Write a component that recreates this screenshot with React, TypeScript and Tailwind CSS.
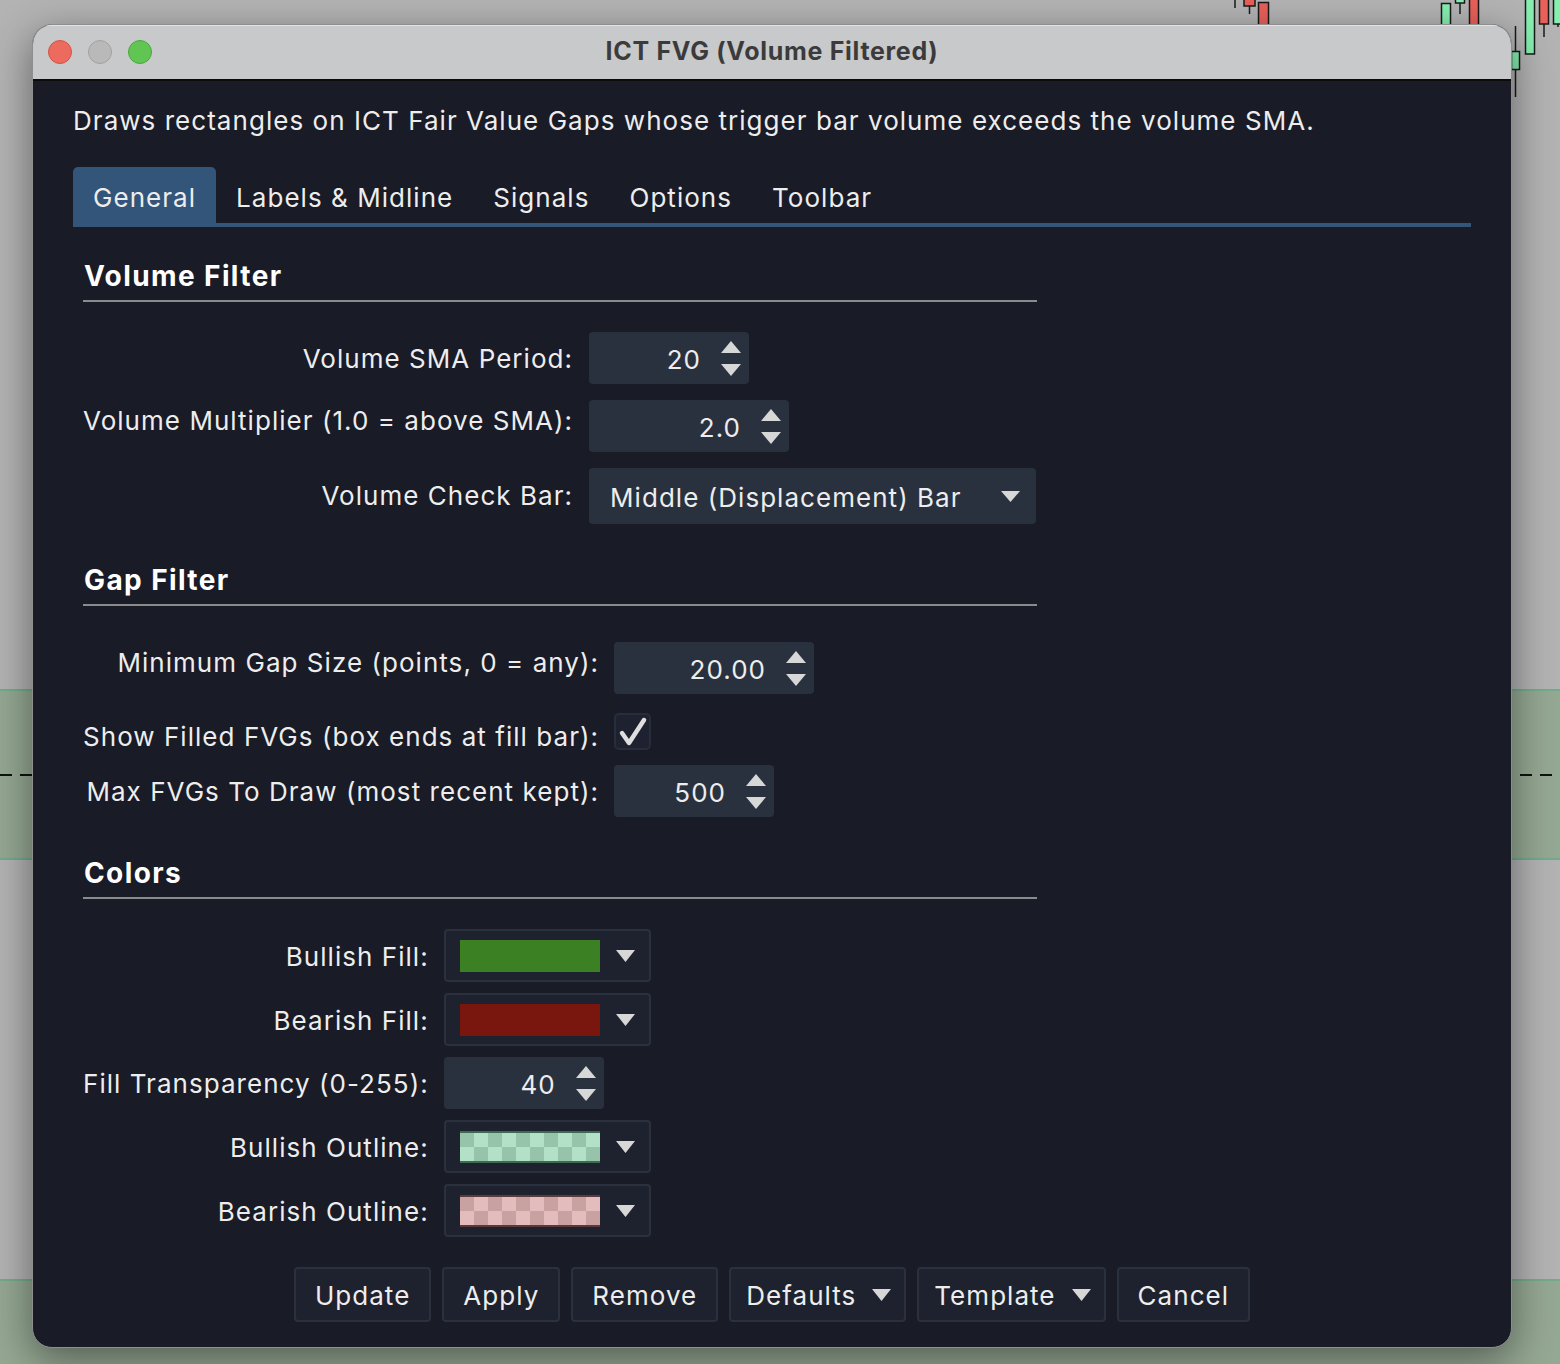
import React from 'react';

type TriProps = { dir?: 'up' | 'down'; w?: number; h?: number; className?: string };
const Tri = ({ dir = 'down', w = 19, h = 11, className = '' }: TriProps) => (
  <svg width={w} height={h} viewBox={`0 0 ${w} ${h}`} className={className}>
    {dir === 'down' ? (
      <polygon points={`0,0 ${w},0 ${w / 2},${h}`} fill="#d7d7d7" />
    ) : (
      <polygon points={`0,${h} ${w},${h} ${w / 2},0`} fill="#d7d7d7" />
    )}
  </svg>
);

const Spinner = ({ value, width }: { value: string; width: string }) => (
  <div className={`flex h-[52px] items-center rounded-[4px] bg-[#29313f] ${width}`}>
    <span className="flex-1 translate-y-[2px] text-right leading-none">{value}</span>
    <div className="ml-[20px] mr-[8px] flex flex-col gap-[11px]">
      <Tri dir="up" w={20} h={12} />
      <Tri dir="down" w={20} h={12} />
    </div>
  </div>
);

const Checker = ({ a, b, edge }: { a: string; b: string; edge: string }) => {
  const cells: React.ReactNode[] = [];
  for (let c = 0; c < 10; c++) {
    for (let r = 0; r < 2; r++) {
      cells.push(
        <rect key={`${c}-${r}`} x={c * 14} y={2 + r * 14} width={14} height={14} fill={(c + r) % 2 === 0 ? a : b} />
      );
    }
  }
  return (
    <svg width={140} height={32} viewBox="0 0 140 32" className="block">
      <rect x={0} y={0} width={140} height={32} fill={edge} />
      {cells}
    </svg>
  );
};

const ColorCombo = ({ children }: { children: React.ReactNode }) => (
  <div className="flex h-[53px] w-[207px] items-center rounded-[4px] border-2 border-[#2b303e] bg-[#1e222e] pl-[14px]">
    {children}
    <Tri className="ml-[16px]" w={19} h={12} />
  </div>
);

const Label = ({ children, className = 'translate-y-[1px]' }: { children: React.ReactNode; className?: string }) => (
  <div className={`self-center text-right leading-[36px] whitespace-nowrap ${className}`}>{children}</div>
);

const SectionHeader = ({ title }: { title: string }) => (
  <div className="w-[954px] border-b-2 border-[#8b8b8b] pb-[7px]">
    <div className="translate-y-[1px] pl-[1px] text-[28px] leading-[36px] font-bold tracking-[1.4px] text-white">{title}</div>
  </div>
);

const Button = ({ children, arrow = false }: { children: React.ReactNode; arrow?: boolean }) => (
  <div
    className={`flex h-[55px] items-center rounded-[4px] border-2 border-[#2b303e] bg-[#1e222e] ${
      arrow ? 'pl-[15px] pr-[13px]' : 'px-[19px]'
    }`}
  >
    <span className="translate-y-[1px] leading-none">{children}</span>
    {arrow && <Tri className="ml-[16px]" w={19} h={12} />}
  </div>
);

export default function App() {
  return (
    <div className="relative h-[1364px] w-[1560px] overflow-hidden bg-[#b3b3b3] font-['Inter','Noto_Sans',sans-serif]">
      {/* chart background */}
      <div className="absolute left-0 top-[689px] h-[171px] w-full border-y-2 border-[#72ab8b] bg-[#95a893]" />
      <div className="absolute left-0 top-[774px] h-[2px] w-full bg-[repeating-linear-gradient(90deg,#111_0px,#111_12px,transparent_12px,transparent_20px)]" />
      <div className="absolute left-0 top-[1279px] h-[85px] w-full border-t-2 border-[#72ab8b] bg-[#95a893]" />
      <svg className="absolute left-0 top-0" width={1560} height={110} viewBox="0 0 1560 110">
        <g stroke="#1a1a1a" strokeWidth={1.5}>
          <line x1={1235} y1={0} x2={1235} y2={8} />
          <line x1={1249.5} y1={0} x2={1249.5} y2={14} />
          <rect x={1244} y={-2} width={11} height={8} fill="#e8605a" />
          <rect x={1258.5} y={2.5} width={10} height={30} fill="#e8605a" />
          <rect x={1441.5} y={3.5} width={9} height={30} fill="#86efb0" />
          <line x1={1460} y1={0} x2={1460} y2={14} />
          <rect x={1455.5} y={-2} width={9} height={5} fill="#86efb0" />
          <rect x={1469.5} y={-2} width={9} height={34} fill="#e8605a" />
          <line x1={1515.5} y1={26} x2={1515.5} y2={97} />
          <rect x={1511.5} y={51.5} width={8} height={18} fill="#86efb0" />
          <rect x={1525.5} y={-2} width={9} height={56} fill="#86efb0" />
          <line x1={1544} y1={0} x2={1544} y2={37} />
          <rect x={1539.5} y={-2} width={9} height={26} fill="#e8605a" />
          <line x1={1558} y1={0} x2={1558} y2={27} />
          <rect x={1553.5} y={-2} width={9} height={26} fill="#86efb0" />
        </g>
      </svg>

      {/* window */}
      <div className="absolute left-[32px] top-[24px] w-[1480px] overflow-hidden rounded-[20px] border border-[#8e8e8e] bg-[#191b26] text-[26px] tracking-[1.04px] text-[#ededed] shadow-[0_12px_40px_rgba(0,0,0,0.45)]">
        {/* title bar */}
        <div className="relative flex h-[56px] items-center border-b-2 border-[#0c0c0c] bg-[#c8c9cb] shadow-[inset_0_1px_0_#e2e3e4]">
          <div className="ml-[15px] flex gap-[16px]">
            <div className="h-[24px] w-[24px] rounded-full border border-[#d35446] bg-[#ec6a5e]" />
            <div className="h-[24px] w-[24px] rounded-full border border-[#a2a2a2] bg-[#b9b9b9]" />
            <div className="h-[24px] w-[24px] rounded-full border border-[#4aa83f] bg-[#61c554]" />
          </div>
          <div className="absolute inset-0 flex items-center justify-center text-[25px] font-bold tracking-[0.7px] text-[#3b3b3b]">
            ICT FVG (Volume Filtered)
          </div>
        </div>

        {/* body */}
        <div className="px-[40px] pt-[22px] pb-[25px]">
          <div className="leading-[36px]">
            Draws rectangles on ICT Fair Value Gaps whose trigger bar volume exceeds the volume SMA.
          </div>

          {/* tabs */}
          <div className="mt-[28px] flex border-b-4 border-[#34557a]">
            <div className="flex h-[56px] items-center rounded-t-[5px] bg-[#34557a] px-[20px] pt-[4px]">General</div>
            <div className="flex h-[56px] items-center px-[20px] pt-[4px]">Labels &amp; Midline</div>
            <div className="flex h-[56px] items-center px-[20px] pt-[4px]">Signals</div>
            <div className="flex h-[56px] items-center px-[20px] pt-[4px]">Options</div>
            <div className="flex h-[56px] items-center px-[20px] pt-[4px]">Toolbar</div>
          </div>

          <div className="pl-[10px]">
            {/* Volume Filter */}
            <div className="mt-[30px]">
              <SectionHeader title="Volume Filter" />
              <div className="mt-[30px] grid grid-cols-[max-content_max-content] gap-x-[16px] gap-y-[16px]">
                <Label>Volume SMA Period:</Label>
                <Spinner value="20" width="w-[160px]" />
                <Label className="-translate-y-[5px]">Volume Multiplier (1.0 = above SMA):</Label>
                <Spinner value="2.0" width="w-[200px]" />
                <Label className="translate-y-0">Volume Check Bar:</Label>
                <div className="flex h-[56px] w-[447px] items-center justify-between rounded-[4px] bg-[#29313f] pl-[21px] pr-[16px]">
                  <span className="translate-y-[2px] leading-none">Middle (Displacement) Bar</span>
                  <Tri w={19} h={11} />
                </div>
              </div>
            </div>

            {/* Gap Filter */}
            <div className="mt-[37px]">
              <SectionHeader title="Gap Filter" />
              <div className="mt-[36px] grid grid-cols-[max-content_max-content] gap-x-[15px] gap-y-[17px]">
                <Label className="-translate-y-[5px]">Minimum Gap Size (points, 0 = any):</Label>
                <Spinner value="20.00" width="w-[200px]" />
                <Label className="translate-y-[7px]">Show Filled FVGs (box ends at fill bar):</Label>
                <div className="h-[37px] translate-y-[2px]">
                  <div className="flex h-[37px] w-[37px] items-center justify-center rounded-[5px] border-2 border-[#282d3b] bg-[#1e2130]">
                    <svg width={33} height={33} viewBox="0 0 33 33">
                      <path d="M6 18 L13 28 L28 5" fill="none" stroke="#dedede" strokeWidth={4.5} strokeLinecap="round" strokeLinejoin="round" />
                    </svg>
                  </div>
                </div>
                <Label>Max FVGs To Draw (most recent kept):</Label>
                <Spinner value="500" width="w-[160px]" />
              </div>
            </div>

            {/* Colors */}
            <div className="mt-[37px]">
              <SectionHeader title="Colors" />
              <div className="mt-[30px] grid grid-cols-[max-content_max-content] gap-x-[15px] gap-y-[11px]">
                <Label>Bullish Fill:</Label>
                <ColorCombo>
                  <div className="h-[32px] w-[140px] bg-[#3b8123]" />
                </ColorCombo>
                <Label>Bearish Fill:</Label>
                <ColorCombo>
                  <div className="h-[32px] w-[140px] bg-[#79170f]" />
                </ColorCombo>
                <Label>Fill Transparency (0-255):</Label>
                <Spinner value="40" width="w-[160px]" />
                <Label>Bullish Outline:</Label>
                <ColorCombo>
                  <Checker a="#96c3a9" b="#b3e1c8" edge="#3d6a50" />
                </ColorCombo>
                <Label>Bearish Outline:</Label>
                <ColorCombo>
                  <Checker a="#c9a1a1" b="#e3bdbd" edge="#5a3a3c" />
                </ColorCombo>
              </div>
            </div>
          </div>

          {/* buttons */}
          <div className="mt-[30px] flex justify-center gap-[11px]">
            <Button>Update</Button>
            <Button>Apply</Button>
            <Button>Remove</Button>
            <Button arrow>Defaults</Button>
            <Button arrow>Template</Button>
            <Button>Cancel</Button>
          </div>
        </div>
      </div>
    </div>
  );
}
